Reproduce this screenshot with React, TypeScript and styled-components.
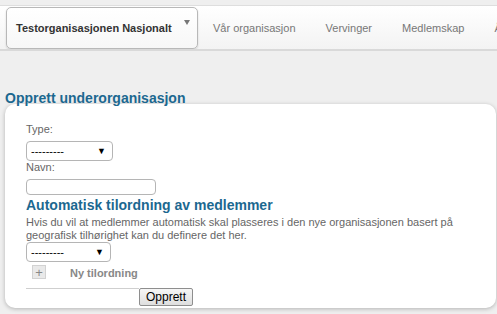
import styled, { createGlobalStyle } from "styled-components";

const GlobalStyle = createGlobalStyle`
  body {
    margin: 0;
    background: #efefef;
    font-family: "Liberation Sans", Arial, sans-serif;
    overflow: hidden;
  }
`;

const Page = styled.div`
  width: 497px;
  height: 314px;
  padding-top: 5px;
  box-sizing: border-box;
`;

const NavBar = styled.nav`
  display: flex;
  align-items: center;
  height: 43px;
  border-top: 1px solid #dedede;
  border-bottom: 2px solid #d9d9d9;
  background: linear-gradient(#ffffff, #f3f3f3);
  white-space: nowrap;
  overflow: hidden;
`;

const OrgTab = styled.div`
  position: relative;
  flex-shrink: 0;
  display: flex;
  align-items: center;
  box-sizing: border-box;
  width: 192px;
  height: 42px;
  margin-left: 6px;
  padding-left: 9px;
  border: 1px solid #b8b8b8;
  border-radius: 5px;
  background: linear-gradient(#ffffff, #f7f7f7);
  box-shadow: 0 1px 2px rgba(0, 0, 0, 0.15);
  font-size: 11px;
  font-weight: bold;
  color: #333;
`;

const Caret = styled.span`
  position: absolute;
  top: 12px;
  right: 7px;
  width: 0;
  height: 0;
  border-left: 3.5px solid transparent;
  border-right: 3.5px solid transparent;
  border-top: 5px solid #777;
`;

const NavItem = styled.div`
  flex-shrink: 0;
  padding: 0 15px;
  font-size: 11px;
  color: #777;
  &:first-of-type {
    padding-left: 16px;
  }
`;

const Title = styled.h2`
  position: relative;
  z-index: 1;
  margin: 39px 0 0 5px;
  font-size: 14px;
  line-height: 16px;
  color: #1c6890;
`;

const Card = styled.section`
  margin: -2px 1px 0 5px;
  padding: 19px 20px 0 21px;
  height: 204px;
  box-sizing: border-box;
  background: #fff;
  border-radius: 10px;
  box-shadow: 0 1px 4px rgba(0, 0, 0, 0.25);
  font-size: 11px;
  color: #666;
`;

const Label = styled.div`
  line-height: 13px;
  margin-bottom: 5px;
`;

const Select = styled.div<{ $width: number }>`
  display: flex;
  align-items: center;
  justify-content: space-between;
  box-sizing: border-box;
  width: ${(p) => p.$width}px;
  height: 20px;
  padding: 0 6px 0 4px;
  border: 1px solid #b5b5b5;
  border-radius: 4px;
  color: #000;
  font-size: 11px;
`;

const Arrow = styled.span`
  font-size: 9px;
  color: #000;
`;

const Input = styled.div`
  box-sizing: border-box;
  width: 130px;
  height: 16px;
  margin-top: 1px;
  border: 1px solid #b5b5b5;
  border-radius: 4px;
`;

const SubHeading = styled.h3`
  margin: 2px 0 2px;
  font-size: 14px;
  line-height: 17px;
  color: #1c6890;
`;

const Help = styled.p`
  margin: 0;
  line-height: 13px;
`;

const RuleRow = styled.div`
  display: flex;
  align-items: flex-start;
  height: 26px;
  margin-left: 6px;
  gap: 24px;
`;

const PlusButton = styled.span`
  display: flex;
  align-items: center;
  justify-content: center;
  box-sizing: border-box;
  width: 14px;
  height: 14px;
  margin-top: 3px;
  background: #e9e9e9;
  border: 1px solid #d2d2d2;
  color: #888;
  font-size: 13px;
  line-height: 1;
`;

const RuleLabel = styled.span`
  margin-top: 5px;
  line-height: 13px;
  font-weight: bold;
  color: #888;
`;

const Footer = styled.div`
  display: flex;
  align-items: flex-start;
`;

const Divider = styled.div`
  width: 113px;
  border-top: 1px solid #cfcfcf;
`;

const Button = styled.button`
  height: 18px;
  padding: 0 6px;
  border: 1px solid #8e8e8e;
  border-radius: 2px;
  background: linear-gradient(#f6f6f6, #dedede);
  font-family: "Liberation Sans", Arial, sans-serif;
  font-size: 12px;
  color: #000;
`;

export default function App() {
  return (
    <>
      <GlobalStyle />
      <Page>
        <NavBar>
          <OrgTab>
            Testorganisasjonen Nasjonalt
            <Caret />
          </OrgTab>
          <NavItem>Vår organisasjon</NavItem>
          <NavItem>Vervinger</NavItem>
          <NavItem>Medlemskap</NavItem>
          <NavItem>Årsmøte</NavItem>
        </NavBar>
        <Title>Opprett underorganisasjon</Title>
        <Card>
          <Label>Type:</Label>
          <Select $width={87}>
            ---------
            <Arrow>▼</Arrow>
          </Select>
          <Label>Navn:</Label>
          <Input />
          <SubHeading>Automatisk tilordning av medlemmer</SubHeading>
          <Help>
            Hvis du vil at medlemmer automatisk skal plasseres i den nye organisasjonen basert på
            geografisk tilhørighet kan du definere det her.
          </Help>
          <Select $width={85}>
            ---------
            <Arrow>▼</Arrow>
          </Select>
          <RuleRow>
            <PlusButton>+</PlusButton>
            <RuleLabel>Ny tilordning</RuleLabel>
          </RuleRow>
          <Footer>
            <Divider />
            <Button>Opprett</Button>
          </Footer>
        </Card>
      </Page>
    </>
  );
}
